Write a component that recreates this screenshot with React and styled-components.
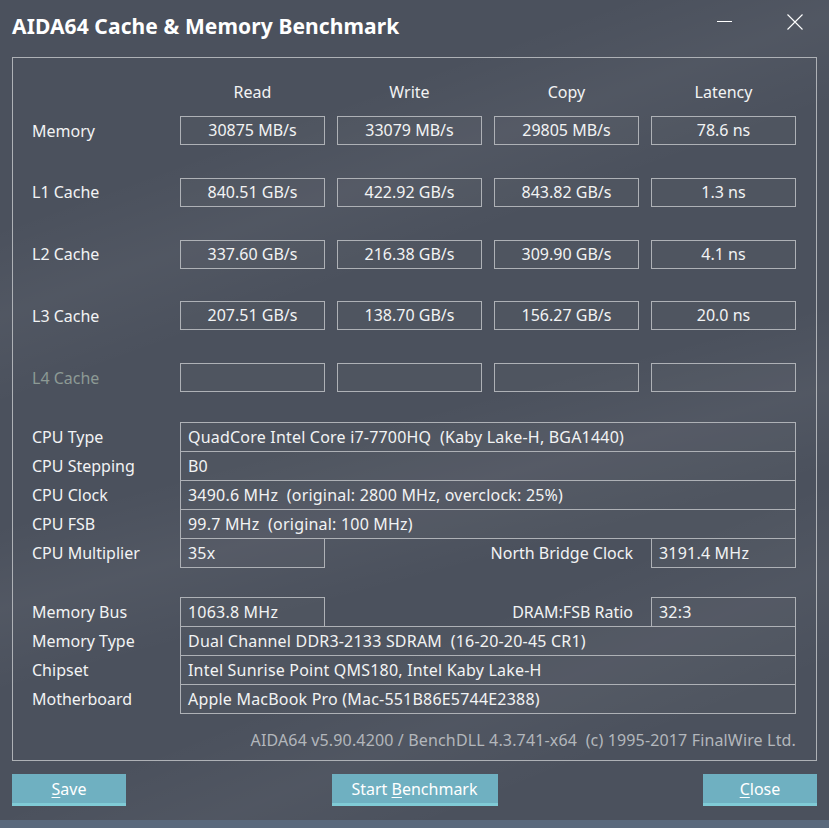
import React from "react";
import styled, { createGlobalStyle } from "styled-components";

const GlobalStyle = createGlobalStyle`
  html, body {
    margin: 0;
    padding: 0;
    background: #4b515d;
  }
  * {
    box-sizing: border-box;
  }
`;

const Window = styled.div`
  width: 829px;
  height: 828px;
  display: flex;
  flex-direction: column;
  overflow: hidden;
  font-family: "Noto Sans", "Open Sans", sans-serif;
  font-size: 16px;
  color: #f2f3f4;
  background:
    linear-gradient(160deg, rgba(255, 255, 255, 0) 20%, rgba(255, 255, 255, 0.035) 28%, rgba(255, 255, 255, 0) 36%),
    linear-gradient(165deg, rgba(255, 255, 255, 0) 50%, rgba(255, 255, 255, 0.04) 58%, rgba(255, 255, 255, 0) 66%),
    linear-gradient(158deg, rgba(0, 0, 0, 0) 70%, rgba(255, 255, 255, 0.03) 78%, rgba(0, 0, 0, 0) 86%),
    #4b515d;
`;

const TitleBar = styled.div`
  height: 57px;
  flex: none;
  display: flex;
  align-items: center;
  padding: 0 11px 6px 12px;
`;

const Title = styled.h1`
  flex: 1;
  margin: 0;
  font-size: 21px;
  font-weight: 700;
  letter-spacing: 0.1px;
  color: #ffffff;
`;

const WinButton = styled.button`
  width: 46px;
  height: 32px;
  margin-top: -8px;
  border: none;
  background: transparent;
  padding: 0;
  display: flex;
  align-items: center;
  justify-content: center;
  margin-left: ${(p) => p.$ml || 0}px;
`;

const Frame = styled.div`
  margin: 0 12px;
  height: 704px;
  flex: none;
  border: 1px solid #aeb1b6;
  display: flex;
  flex-direction: column;
  padding-top: 20px;
`;

const Columns = styled.div`
  display: grid;
  grid-template-columns: 155px 145px 145px 145px 145px;
  column-gap: 12px;
  align-items: center;
`;

const HeadRow = styled(Columns)`
  height: 28px;
  margin-bottom: 10px;
`;

const BenchGrid = styled(Columns)`
  row-gap: 32.75px;
  grid-auto-rows: 29px;
`;

const HeadCell = styled.div`
  text-align: center;
`;

const RowLabel = styled.div`
  padding-left: 19px;
  color: ${(p) => (p.$dim ? "#8d9a95" : "#f2f3f4")};
`;

const ValueBox = styled.div`
  height: 29px;
  border: 1px solid #aeb1b6;
  background: rgba(255, 255, 255, 0.025);
  display: flex;
  align-items: center;
  justify-content: center;
  padding-bottom: 1px;
`;

const InfoBlock = styled.div`
  display: flex;
  flex-direction: column;
  margin-top: ${(p) => p.$mt}px;
`;

const InfoRow = styled.div`
  display: flex;
  align-items: stretch;
  height: 30px;
  & + & {
    margin-top: -1px;
  }
`;

const InfoLabel = styled.div`
  width: 167px;
  flex: none;
  padding-left: 19px;
  display: flex;
  align-items: center;
`;

const InfoBox = styled.div`
  width: ${(p) => (p.$w ? `${p.$w}px` : "616px")};
  flex: none;
  border: 1px solid #aeb1b6;
  background: rgba(255, 255, 255, 0.025);
  display: flex;
  align-items: center;
  padding: 0 0 1px 7px;
  letter-spacing: 0.2px;
  white-space: pre;
`;

const MidLabel = styled.div`
  flex: none;
  width: 326px;
  display: flex;
  align-items: center;
  justify-content: flex-end;
  padding-right: 18px;
`;

const Footer = styled.div`
  margin-top: auto;
  height: 40px;
  padding-right: 20px;
  display: flex;
  align-items: center;
  justify-content: flex-end;
  color: #b3b7bc;
  letter-spacing: 0.15px;
  white-space: pre;
`;

const ButtonBar = styled.div`
  display: flex;
  justify-content: space-between;
  align-items: flex-start;
  padding: 13px 12px 0;
  height: 59px;
  flex: none;
`;

const Button = styled.button`
  width: ${(p) => p.$w}px;
  height: 32px;
  border: none;
  border-bottom: 3px solid #80cbd6;
  background: #6fb0c1;
  color: #ffffff;
  font-family: "Noto Sans", "Open Sans", sans-serif;
  font-size: 16px;
  padding: 1px 0 0;
  u {
    text-decoration-thickness: 1px;
    text-underline-offset: 2px;
  }
`;

const BottomStrip = styled.div`
  flex: 1;
  background: #5a697c;
`;

const benchRows = [
  { label: "Memory", values: ["30875 MB/s", "33079 MB/s", "29805 MB/s", "78.6 ns"] },
  { label: "L1 Cache", values: ["840.51 GB/s", "422.92 GB/s", "843.82 GB/s", "1.3 ns"] },
  { label: "L2 Cache", values: ["337.60 GB/s", "216.38 GB/s", "309.90 GB/s", "4.1 ns"] },
  { label: "L3 Cache", values: ["207.51 GB/s", "138.70 GB/s", "156.27 GB/s", "20.0 ns"] },
  { label: "L4 Cache", values: ["", "", "", ""], dim: true },
];

const Minimize = () => (
  <svg width="15" height="15" viewBox="0 0 15 15">
    <line x1="0" y1="7.5" x2="15" y2="7.5" stroke="#fff" strokeWidth="1" />
  </svg>
);

const CloseIcon = () => (
  <svg width="16" height="16" viewBox="0 0 16 16">
    <path d="M0.5 0.5 L15.5 15.5 M15.5 0.5 L0.5 15.5" stroke="#fff" strokeWidth="1.1" fill="none" />
  </svg>
);

export default function App() {
  return (
    <Window>
      <GlobalStyle />
      <TitleBar>
        <Title>AIDA64 Cache &amp; Memory Benchmark</Title>
        <WinButton>
          <Minimize />
        </WinButton>
        <WinButton $ml={25}>
          <CloseIcon />
        </WinButton>
      </TitleBar>
      <Frame>
        <HeadRow>
          <div />
          <HeadCell>Read</HeadCell>
          <HeadCell>Write</HeadCell>
          <HeadCell>Copy</HeadCell>
          <HeadCell>Latency</HeadCell>
        </HeadRow>
        <BenchGrid>
          {benchRows.map((row) => (
            <React.Fragment key={row.label}>
              <RowLabel $dim={row.dim}>{row.label}</RowLabel>
              {row.values.map((v, i) => (
                <ValueBox key={i}>{v}</ValueBox>
              ))}
            </React.Fragment>
          ))}
        </BenchGrid>

        <InfoBlock $mt={30}>
          <InfoRow>
            <InfoLabel>CPU Type</InfoLabel>
            <InfoBox>{"QuadCore Intel Core i7-7700HQ  (Kaby Lake-H, BGA1440)"}</InfoBox>
          </InfoRow>
          <InfoRow>
            <InfoLabel>CPU Stepping</InfoLabel>
            <InfoBox>B0</InfoBox>
          </InfoRow>
          <InfoRow>
            <InfoLabel>CPU Clock</InfoLabel>
            <InfoBox>{"3490.6 MHz  (original: 2800 MHz, overclock: 25%)"}</InfoBox>
          </InfoRow>
          <InfoRow>
            <InfoLabel>CPU FSB</InfoLabel>
            <InfoBox>{"99.7 MHz  (original: 100 MHz)"}</InfoBox>
          </InfoRow>
          <InfoRow>
            <InfoLabel>CPU Multiplier</InfoLabel>
            <InfoBox $w={145}>35x</InfoBox>
            <MidLabel>North Bridge Clock</MidLabel>
            <InfoBox $w={145}>3191.4 MHz</InfoBox>
          </InfoRow>
        </InfoBlock>

        <InfoBlock $mt={29}>
          <InfoRow>
            <InfoLabel>Memory Bus</InfoLabel>
            <InfoBox $w={145}>1063.8 MHz</InfoBox>
            <MidLabel>DRAM:FSB Ratio</MidLabel>
            <InfoBox $w={145}>32:3</InfoBox>
          </InfoRow>
          <InfoRow>
            <InfoLabel>Memory Type</InfoLabel>
            <InfoBox>{"Dual Channel DDR3-2133 SDRAM  (16-20-20-45 CR1)"}</InfoBox>
          </InfoRow>
          <InfoRow>
            <InfoLabel>Chipset</InfoLabel>
            <InfoBox>Intel Sunrise Point QMS180, Intel Kaby Lake-H</InfoBox>
          </InfoRow>
          <InfoRow>
            <InfoLabel>Motherboard</InfoLabel>
            <InfoBox>Apple MacBook Pro (Mac-551B86E5744E2388)</InfoBox>
          </InfoRow>
        </InfoBlock>

        <Footer>{"AIDA64 v5.90.4200 / BenchDLL 4.3.741-x64  (c) 1995-2017 FinalWire Ltd."}</Footer>
      </Frame>
      <ButtonBar>
        <Button $w={114}>
          <u>S</u>ave
        </Button>
        <Button $w={166}>
          Start <u>B</u>enchmark
        </Button>
        <Button $w={114}>
          <u>C</u>lose
        </Button>
      </ButtonBar>
      <BottomStrip />
    </Window>
  );
}
